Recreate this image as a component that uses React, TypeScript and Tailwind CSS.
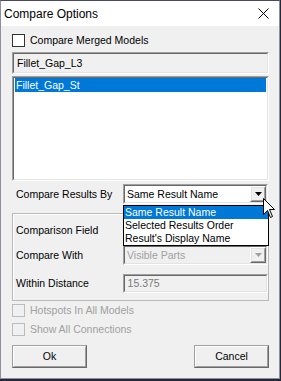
import React from 'react';

// Classic Win32 dialog: "Compare Options"

const Sunken: React.FC<{ className?: string; inner?: string; children?: React.ReactNode }> = ({
  className = '',
  inner = 'bg-white',
  children,
}) => (
  <div className={`border border-t-[#a0a0a0] border-l-[#a0a0a0] border-r-white border-b-white ${className}`}>
    <div className={`h-full border border-t-[#696969] border-l-[#696969] border-r-[#e3e3e3] border-b-[#e3e3e3] ${inner}`}>
      {children}
    </div>
  </div>
);

const Check: React.FC<{ label: string; disabled?: boolean }> = ({ label, disabled }) => (
  <div className="flex items-center h-[13px]">
    <span
      className={`w-[13px] h-[13px] border ${
        disabled ? 'border-[#bcbcbc] bg-[#f0f0f0]' : 'border-[#333333] bg-white'
      }`}
    />
    <span className={`ml-[5px] ${disabled ? 'text-[#a0a0a0]' : 'text-black'}`}>{label}</span>
  </div>
);

const Combo: React.FC<{ value: string; disabled?: boolean; className?: string }> = ({
  value,
  disabled,
  className = '',
}) => (
  <Sunken className={`h-[20px] ${className}`} inner={disabled ? 'bg-[#f0f0f0]' : 'bg-white'}>
    <div className="flex h-full items-center">
      <span className={`flex-1 pl-[2px] truncate ${disabled ? 'text-[#a0a0a0]' : 'text-black'}`}>{value}</span>
      <div className="h-full border border-t-white border-l-white border-r-[#696969] border-b-[#696969]">
        <div className="h-full w-[14px] flex items-center justify-center bg-[#f0f0f0] border border-t-[#e3e3e3] border-l-[#e3e3e3] border-r-[#a0a0a0] border-b-[#a0a0a0]">
          <svg width="7" height="4" viewBox="0 0 7 4">
            <path d="M0 0H7L3.5 4Z" fill={disabled ? '#a0a0a0' : '#000'} />
          </svg>
        </div>
      </div>
    </div>
  </Sunken>
);

const Button: React.FC<{ label: string }> = ({ label }) => (
  <div className="w-[75px] h-[23px] border border-t-[#a0a0a0] border-l-[#a0a0a0] border-r-[#696969] border-b-[#696969]">
    <div className="h-full flex items-center justify-center bg-[#f0f0f0] border border-t-white border-l-white border-r-[#a0a0a0] border-b-[#a0a0a0] text-black">
      {label}
    </div>
  </div>
);

export default function App() {
  const options = ['Same Result Name', 'Selected Results Order', "Result's Display Name"];

  return (
    <div className="w-[281px] h-[381px] bg-[#24283a] font-['Liberation_Sans',Arial,sans-serif] text-[10.5px] leading-none">
      <div className="relative w-[280px] h-[379px] border border-[#8e8e9e] border-t-[#4a4a5e] bg-[#f0f0f0] flex flex-col">
        {/* Title bar */}
        <div className="h-[25px] bg-white flex items-center justify-between pl-[3px] pr-[10px]">
          <span className="text-[12px] text-black">Compare Options</span>
          <svg width="11" height="11" viewBox="0 0 11 11">
            <path d="M0.5 0.5L10.5 10.5M10.5 0.5L0.5 10.5" stroke="#000" strokeWidth="1" />
          </svg>
        </div>

        {/* Client */}
        <div className="flex-1 flex flex-col pl-[11px] pr-[10px]">
          <div className="mt-[8px]">
            <Check label="Compare Merged Models" />
          </div>

          <Sunken className="mt-[5px] h-[22px]" inner="bg-[#f0f0f0]">
            <div className="h-full flex items-center pl-[3px] text-black">Fillet_Gap_L3</div>
          </Sunken>

          <Sunken className="mt-[2px] h-[105px]">
            <div className="h-[14px] mx-[1px] flex items-center pl-[1px] bg-[#0078d7] text-white">Fillet_Gap_St</div>
          </Sunken>

          <div className="mt-[3px] flex items-center">
            <span className="w-[111px] pl-[4px] text-black">Compare Results By</span>
            <div className="relative">
              <Combo value="Same Result Name" className="w-[145px]" />
              <div className="absolute z-10 left-0 top-[21px] w-[146px] border border-black bg-white">
                {options.map((o, i) => (
                  <div
                    key={o}
                    className={`h-[13px] flex items-center pl-[1px] ${
                      i === 0 ? 'bg-[#0078d7] text-white' : 'text-black'
                    }`}
                  >
                    {o}
                  </div>
                ))}
              </div>
            </div>
          </div>

          {/* Group */}
          <div className="mt-[9px] h-[88px] border border-[#b9b9b9] shadow-[inset_1px_1px_0_white] pl-[3px] flex flex-col">
            <div className="mt-[6px] flex items-center">
              <span className="w-[107px] text-black">Comparison Field</span>
              <Combo value="" disabled className="w-[145px]" />
            </div>
            <div className="mt-[5px] flex items-center">
              <span className="w-[107px] text-black">Compare With</span>
              <Combo value="Visible Parts" disabled className="w-[145px]" />
            </div>
            <div className="mt-[9px] flex items-center">
              <span className="w-[107px] text-black">Within Distance</span>
              <Sunken className="w-[146px] h-[19px]" inner="bg-[#f0f0f0]">
                <div className="h-full flex items-center pl-[3px] text-[#7a7a7a]">15.375</div>
              </Sunken>
            </div>
          </div>

          <div className="mt-[3px]">
            <Check label="Hotspots In All Models" disabled />
          </div>
          <div className="mt-[6px]">
            <Check label="Show All Connections" disabled />
          </div>

          <div className="mt-[9px] flex justify-between">
            <Button label="Ok" />
            <Button label="Cancel" />
          </div>
        </div>

        {/* Mouse pointer */}
        <svg className="absolute z-20 left-[262px] top-[197px]" width="13" height="21" viewBox="0 0 13 21">
          <path
            d="M0.5 0.5V16.5L4.5 12.5L7.5 19.5L9.5 18.5L6.5 11.5H11.5Z"
            fill="#fff"
            stroke="#000"
            strokeWidth="1"
            strokeLinejoin="miter"
          />
        </svg>
      </div>
    </div>
  );
}
